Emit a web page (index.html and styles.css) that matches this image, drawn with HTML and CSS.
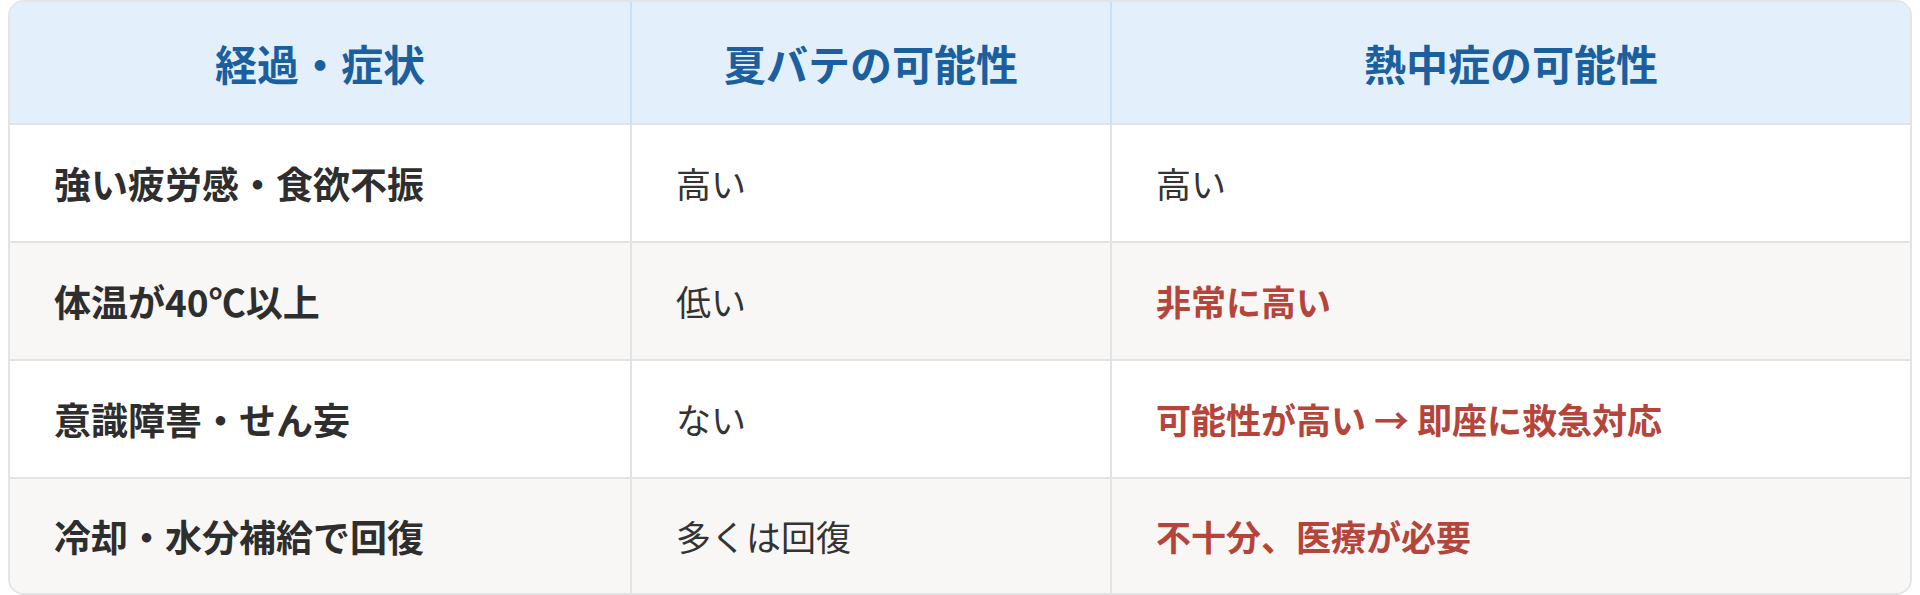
FILE: index.html
```html
<!DOCTYPE html>
<html lang="ja">
<head>
<meta charset="utf-8">
<link rel="stylesheet" href="styles.css">
</head>
<body>
<div class="table-wrap">
  <table class="cmp">
    <colgroup>
      <col class="c1">
      <col class="c2">
      <col class="c3">
    </colgroup>
    <thead>
      <tr>
        <th>経過・症状</th>
        <th>夏バテの可能性</th>
        <th>熱中症の可能性</th>
      </tr>
    </thead>
    <tbody>
      <tr>
        <td class="sym">強い疲労感・食欲不振</td>
        <td>高い</td>
        <td>高い</td>
      </tr>
      <tr class="alt">
        <td class="sym">体温が40℃以上</td>
        <td>低い</td>
        <td class="warn">非常に高い</td>
      </tr>
      <tr>
        <td class="sym">意識障害・せん妄</td>
        <td>ない</td>
        <td class="warn">可能性が高い → 即座に救急対応</td>
      </tr>
      <tr class="alt">
        <td class="sym">冷却・水分補給で回復</td>
        <td>多くは回復</td>
        <td class="warn">不十分、医療が必要</td>
      </tr>
    </tbody>
  </table>
</div>
</body>
</html>
```
FILE: styles.css
```css
html, body {
  margin: 0;
  padding: 0;
  background: #ffffff;
}
body {
  padding: 0 8px;
  font-family: "Noto Sans CJK JP", "Noto Sans", sans-serif;
  color: #333333;
}
.table-wrap {
  border: 2px solid #e4e4e4;
  border-radius: 16px;
  overflow: hidden;
  background: #ffffff;
}
.cmp {
  width: 100%;
  border-collapse: separate;
  border-spacing: 0;
  table-layout: fixed;
}
.c1 { width: 622px; }
.c2 { width: 480px; }
.c3 { width: auto; }
.cmp th {
  height: 121px;
  padding: 0;
  background: #e3f0fb;
  color: #1b5f9e;
  font-size: 42px;
  font-weight: 700;
  text-align: center;
  border-bottom: 2px solid #e0e4e8;
  border-right: 2px solid #c9e1f6;
}
.cmp th:last-child { border-right: none; }
.cmp td {
  height: 116px;
  padding: 0 0 0 44px;
  font-size: 35px;
  font-weight: 400;
  color: #333333;
  border-bottom: 2px solid #e3e3e3;
  border-right: 2px solid #e3e3e3;
  vertical-align: middle;
  line-height: 1.3;
}
.cmp td:last-child { border-right: none; }
.cmp tbody tr:last-child td { border-bottom: none; height: 114px; }
.cmp tr.alt td { background: #f8f7f5; }
.cmp td.sym { font-size: 37px; font-weight: 700; color: #2e2e2e; }
.cmp td.warn { font-weight: 700; color: #b5443a; }
```
